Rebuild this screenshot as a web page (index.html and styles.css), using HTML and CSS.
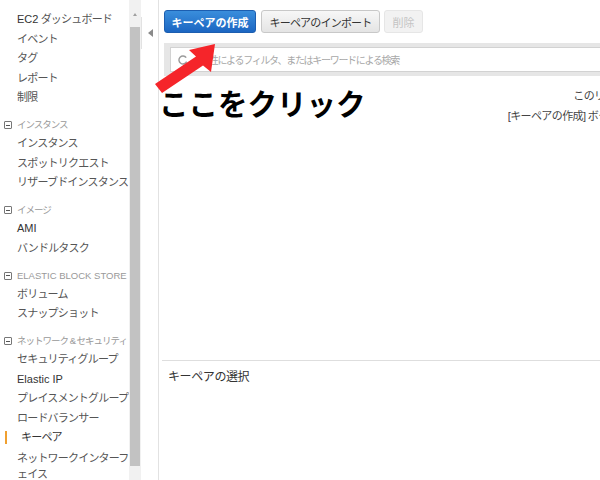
FILE: index.html
```html
<!DOCTYPE html>
<html lang="ja">
<head>
<meta charset="utf-8">
<title>キーペア</title>
<link rel="stylesheet" href="styles.css">
</head>
<body>
<div class="page">
  <nav class="sidebar">
    <div class="item"><span class="latin">EC2</span> ダッシュボード</div>
    <div class="item">イベント</div>
    <div class="item">タグ</div>
    <div class="item">レポート</div>
    <div class="item">制限</div>

    <div class="group"><span class="minus"></span>インスタンス</div>
    <div class="item">インスタンス</div>
    <div class="item">スポットリクエスト</div>
    <div class="item">リザーブドインスタンス</div>

    <div class="group"><span class="minus"></span>イメージ</div>
    <div class="item"><span class="latin">AMI</span></div>
    <div class="item">バンドルタスク</div>

    <div class="group caps"><span class="minus"></span>ELASTIC BLOCK STORE</div>
    <div class="item">ボリューム</div>
    <div class="item">スナップショット</div>

    <div class="group"><span class="minus"></span>ネットワーク &amp; セキュリティ</div>
    <div class="item">セキュリティグループ</div>
    <div class="item"><span class="latin">Elastic IP</span></div>
    <div class="item">プレイスメントグループ</div>
    <div class="item">ロードバランサー</div>
    <div class="item active">キーペア</div>
    <div class="item wrap">ネットワークインターフ<br>ェイス</div>
  </nav>
  <div class="scrollbar">
    <div class="sb-up"></div>
    <div class="sb-thumb"></div>
  </div>
  <div class="collapse">
    <div class="tab"><span class="tri"></span></div>
  </div>
  <main class="main">
    <div class="toolbar">
      <button class="btn primary">キーペアの作成</button>
      <button class="btn import">キーペアのインポート</button>
      <button class="btn disabled">削除</button>
    </div>
    <div class="filter">
      <div class="input">
        <svg class="search" width="10" height="10" viewBox="0 0 10 10"><path d="M8.2 2.6 A4 4 0 1 0 8.6 6.6" fill="none" stroke="#9a9a9a" stroke-width="1.4"/></svg>
        <span class="placeholder">属性によるフィルタ、またはキーワードによる検索</span>
      </div>
    </div>
    <div class="list">
      <div class="empty">
        <p>このリージョンにはキーペアがありません。</p>
        <p>[キーペアの作成] ボタンをクリックして、キーペアを作成してください。</p>
      </div>
    </div>
    <div class="detail">キーペアの選択</div>
  </main>
</div>
<svg class="arrow" width="80" height="60" viewBox="150 40 80 60">
  <polygon points="215,44 189,50 196,56.5 155,84 162,93 203,65.5 211,72" fill="#f5252a"/>
</svg>
<div class="callout">ここをクリック</div>
</body>
</html>
```

FILE: styles.css
```css
* { box-sizing: border-box; }
html, body { margin: 0; padding: 0; background: #fff; }
body {
  font-family: "Liberation Sans", "Noto Sans CJK JP", sans-serif;
  color: #555;
  width: 600px;
  height: 480px;
  overflow: hidden;
  position: relative;
}
.page { display: flex; height: 480px; }

.sidebar {
  width: 129px;
  flex: none;
  padding-top: 10px;
  font-size: 11px;
  overflow: hidden;
}
.item {
  padding: 2px 0 2px 17px;
  line-height: 15.5px;
  color: #555;
  white-space: nowrap;
  letter-spacing: -0.8px;
}
.item .latin { letter-spacing: 0; color: #333; }
.item.wrap { line-height: 16px; padding-bottom: 0; }
.item.active {
  color: #333;
  padding-left: 21px;
  position: relative;
}
.item.active::before {
  content: "";
  position: absolute;
  left: 5px;
  top: 3px;
  width: 2px;
  height: 13px;
  background: #f0a030;
}
.group {
  margin-top: 8.5px;
  padding: 1px 0 1px 4px;
  line-height: 16px;
  font-size: 9.5px;
  color: #999;
  display: flex;
  align-items: center;
  white-space: nowrap;
  letter-spacing: -1px;
}
.group.caps { letter-spacing: 0; }
.minus {
  width: 8px;
  height: 8px;
  border: 1px solid #777;
  border-radius: 1px;
  margin-right: 5px;
  position: relative;
  flex: none;
}
.minus::after {
  content: "";
  position: absolute;
  left: 1px;
  right: 1px;
  top: 2.5px;
  height: 1px;
  background: #555;
}

.scrollbar {
  width: 12px;
  flex: none;
  background: #f1f1f1;
  display: flex;
  flex-direction: column;
  align-items: center;
}
.sb-up {
  margin-top: 13px;
  width: 0;
  height: 0;
  border-left: 2.5px solid transparent;
  border-right: 2.5px solid transparent;
  border-bottom: 3px solid #a0a0a0;
}
.sb-thumb {
  margin-top: 11px;
  width: 10px;
  height: 439px;
  background: #c2c2c2;
}

.collapse { width: 17px; flex: none; padding-top: 17px; }
.tab {
  height: 32px;
  border-left: 1px solid #e2e2e2;
  display: flex;
  align-items: center;
  justify-content: center;
}
.tri {
  width: 0;
  height: 0;
  border-top: 4px solid transparent;
  border-bottom: 4px solid transparent;
  border-right: 5px solid #8a8a8a;
}

.main {
  flex: 1;
  min-width: 0;
  border-left: 1px solid #e2e2e2;
  overflow: hidden;
  display: flex;
  flex-direction: column;
}
.toolbar {
  display: flex;
  gap: 5px;
  padding: 10px 0 0 5px;
}
.btn {
  font-family: inherit;
  font-size: 11px;
  height: 23px;
  padding: 0;
  border-radius: 3px;
  border: 1px solid #c8c8c8;
  background: linear-gradient(#f7f7f7, #e4e4e4);
  color: #333;
  white-space: nowrap;
  flex: none;
}
.btn.primary {
  width: 92px;
  background: linear-gradient(#3a8edc, #1b66c2);
  border-color: #1c5eb0;
  color: #fff;
  font-weight: bold;
}
.btn.import { width: 119px; letter-spacing: -0.8px; }
.btn.disabled {
  width: 39px;
  margin-left: -1px;
  background: #f2f2f2;
  border-color: #e6e6e6;
  color: #c4c4c4;
}
.filter {
  margin: 10px 0 0 5px;
  background: #e6e6e6;
  padding: 4px 0 4px 6px;
  height: 33px;
}
.input {
  height: 25px;
  background: #fff;
  border: 1px solid #d2d2d2;
  border-right: none;
  display: flex;
  align-items: center;
  padding-left: 7px;
  white-space: nowrap;
  overflow: hidden;
}
.search { flex: none; margin-right: 12px; }
.placeholder { font-size: 10px; letter-spacing: -1.3px; color: #a8a8a8; }

.list {
  height: 284px;
  flex: none;
  overflow: hidden;
}
.empty {
  width: 1036px;
  text-align: center;
  font-size: 11px;
  letter-spacing: -0.6px;
  color: #444;
  padding-top: 10px;
  white-space: nowrap;
}
.empty p { margin: 0; line-height: 20px; }
.detail {
  margin-left: 3px;
  border-top: 1px solid #dedede;
  padding: 8px 0 0 6px;
  font-size: 12px;
  line-height: 16px;
  letter-spacing: -0.4px;
  color: #333;
}

.arrow {
  position: absolute;
  left: 150px;
  top: 40px;
}
.callout {
  position: absolute;
  left: 159px;
  top: 82px;
  font-family: "Noto Sans CJK JP", sans-serif;
  font-weight: bold;
  font-size: 29.5px;
  line-height: 40px;
  color: #000;
  white-space: nowrap;
}
```
